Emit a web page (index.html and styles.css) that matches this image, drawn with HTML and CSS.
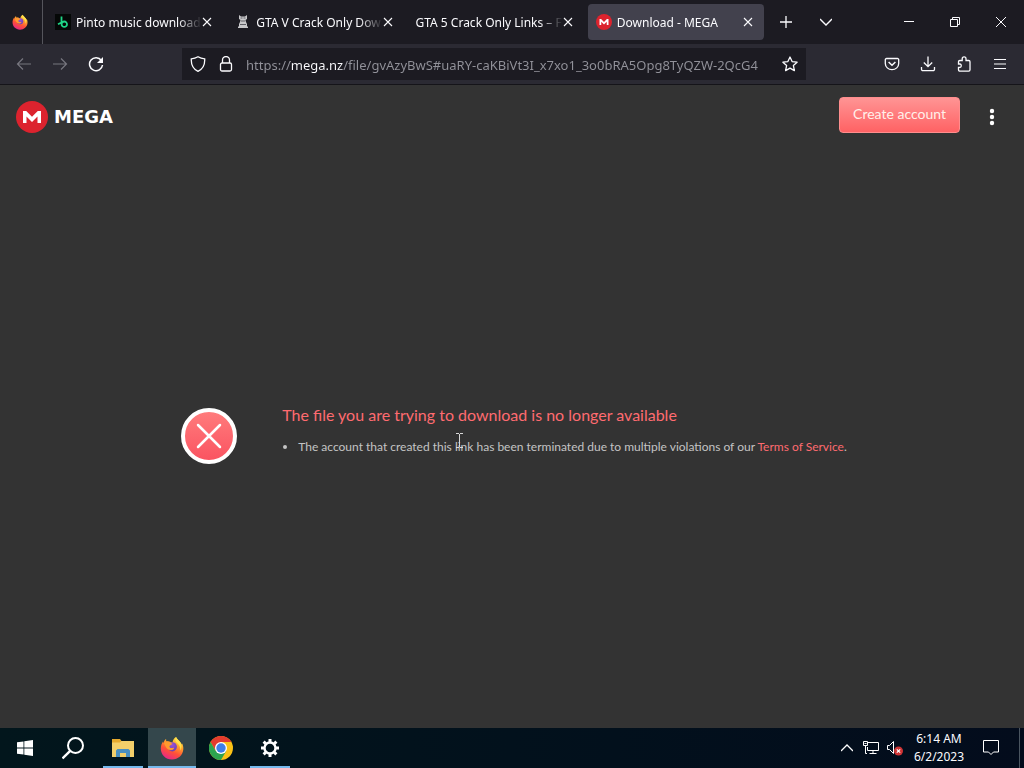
FILE: index.html
```html
<!DOCTYPE html>
<html lang="en">
<head>
<meta charset="utf-8">
<meta name="viewport" content="width=device-width, initial-scale=1">
<title>Download - MEGA</title>
<link rel="stylesheet" href="styles.css">
</head>
<body>
<svg class="defs" aria-hidden="true">
  <defs>
    <linearGradient id="flame" x1="0.8" y1="0" x2="0.3" y2="1">
      <stop offset="0" stop-color="#fff04a"/><stop offset="0.35" stop-color="#ffa02c"/><stop offset="0.65" stop-color="#ff5038"/><stop offset="1" stop-color="#e5258b"/>
    </linearGradient>
    <radialGradient id="globe" cx="0.5" cy="0.3" r="0.7">
      <stop offset="0" stop-color="#9a52d8"/><stop offset="1" stop-color="#6a3fb0"/>
    </radialGradient>
    <linearGradient id="alert" x1="0" y1="0" x2="0" y2="1">
      <stop offset="0" stop-color="#ff7d7d"/><stop offset="1" stop-color="#fa5260"/>
    </linearGradient>
    <symbol id="firefox" viewBox="0 0 24 24">
      <path fill="url(#flame)" d="M16 1c1 2 3 3.500 4.500 5.500.6.800.8 1.300.9 2 .5-.4.500-1 .4-1.500 1.300 2 1.700 4.200 1.500 6.500C22.800 19.200 18 23.500 12 23.500 5.500 23.500.8 18.700.8 12.500c0-3 1-5.300 2.200-7 0 .7.100 1.100.4 1.600C3.900 5 5 3.600 6.200 3c-.3 1 0 2 .4 2.600 1-.2 2.200 0 3 .5 1-.1 2 0 3 .4C12.500 4.500 14 2 16 1z"/>
      <circle cx="12.300" cy="10.800" r="4.600" fill="url(#globe)"/>
      <path fill="#ff9a2e" d="M4 7c1.800-2 4.600-2.200 6.300-1.200-.2.900.6 1.500 2.200 1.700-.3 1.300-2.600 1.500-3 2.700-.3 1 .8 1.800 2 1.900 1 .1 1.700-.5 2.700-.2-.7 1.700-2.300 2.400-4.200 2.200-2.600-.4-4.600-3-6-7.100z"/>
      <path fill="#ffe14d" d="M16 1c1 2 3 3.500 4.500 5.500 1.500 2.200 1.300 6-.2 8 .3-3.300-.8-5.500-3-7.200C15.300 5.700 14.800 3.500 16 1z"/>
    </symbol>
    <symbol id="mega" viewBox="0 0 32 32">
      <circle cx="16" cy="16" r="16" fill="#dc232e"/>
      <path fill="#fff" d="M7 22V10h3.200l5.800 5.800 5.800-5.800H25v12h-3.500v-6.500L16 20.900l-5.500-5.400V22z"/>
    </symbol>
    <symbol id="close" viewBox="0 0 10 10"><path d="M1 1l8 8M9 1L1 9" fill="none" stroke="currentColor" stroke-width="1.100"/></symbol>
  </defs>
</svg>

<header class="browser">
  <div class="tabstrip">
    <button class="pinned" aria-label="Firefox View"><svg class="i16"><use href="#firefox"/></svg></button>
    <div class="tabs">
      <div class="tab">
        <svg class="i16" viewBox="0 0 16 16"><path fill="#050807" d="M0 0h16v16H0z"/><path d="M6.500 2.500V10M12 10.200a2.700 2.700 0 1 1-5.400 0 2.700 2.700 0 1 1 5.400 0zM7 8.300l-4 2" fill="none" stroke="#1fd587" stroke-width="1.800"/></svg>
        <span class="tab-title">Pinto music download</span>
        <button class="tab-close" aria-label="Close tab"><svg class="i10"><use href="#close"/></svg></button>
      </div>
      <div class="tab">
        <svg class="i16" viewBox="0 0 16 16"><path fill="#c9c9cb" d="M4 1l2 1.500h4L12 1v4l-1.500 1L11 8l1 2v2l1 1v1H3v-1l1-1v-2l1-2 .5-2L4 5z"/><path d="M5.500 4h2M8.500 4h2M6 7h4M5 10.500h6" stroke="#5e5e65" stroke-width="1"/></svg>
        <span class="tab-title">GTA V Crack Only Dow</span>
        <button class="tab-close" aria-label="Close tab"><svg class="i10"><use href="#close"/></svg></button>
      </div>
      <div class="tab">
        <span class="tab-title">GTA 5 Crack Only Links – Fi</span>
        <button class="tab-close" aria-label="Close tab"><svg class="i10"><use href="#close"/></svg></button>
      </div>
      <div class="tab active">
        <svg class="i16"><use href="#mega"/></svg>
        <span class="tab-title">Download - MEGA</span>
        <button class="tab-close" aria-label="Close tab"><svg class="i10"><use href="#close"/></svg></button>
      </div>
    </div>
    <button class="tool" aria-label="New tab"><svg class="i12" viewBox="0 0 12 12"><path d="M6 0v12M0 6h12" stroke="currentColor" stroke-width="1.300"/></svg></button>
    <button class="tool" aria-label="List all tabs"><svg class="i12" viewBox="0 0 12 12"><path d="M0 3l6 6 6-6" fill="none" stroke="currentColor" stroke-width="1.400"/></svg></button>
    <div class="window-buttons">
      <button aria-label="Minimize"><svg class="i10" viewBox="0 0 10 10"><path d="M0 4.500h10" stroke="currentColor"/></svg></button>
      <button aria-label="Restore"><svg class="i10" viewBox="0 0 10 10"><path d="M.5 2.500h7v7h-7zM2.500 2.500v-2h7v7h-2" fill="none" stroke="currentColor"/></svg></button>
      <button aria-label="Close"><svg class="i10" viewBox="0 0 10 10"><path d="M0 0l10 10M10 0L0 10" stroke="currentColor"/></svg></button>
    </div>
  </div>

  <div class="navbar">
    <div class="nav-left">
      <button class="tool dim" aria-label="Back"><svg class="i16" viewBox="0 0 16 16"><path d="M15 8H1.500M7 2.500L1.500 8 7 13.500" fill="none" stroke="currentColor" stroke-width="1.200"/></svg></button>
      <button class="tool dim" aria-label="Forward"><svg class="i16" viewBox="0 0 16 16"><path d="M1 8h13.500M9 2.500L14.500 8 9 13.500" fill="none" stroke="currentColor" stroke-width="1.200"/></svg></button>
      <button class="tool" aria-label="Reload"><svg class="i16" viewBox="0 0 16 16"><path d="M13.400 4.500A6.500 6.500 0 1 0 14.500 9" fill="none" stroke="currentColor" stroke-width="1.500"/><path d="M15 1v6H9z" fill="currentColor"/></svg></button>
    </div>
    <div class="urlbar">
      <svg class="i16" viewBox="0 0 16 16"><path d="M8 .8C6 2 3.500 2.700 1.300 2.900 1 8.500 3 13 8 15.300 13 13 15 8.500 14.700 2.900 12.500 2.700 10 2 8 .8z" fill="none" stroke="currentColor" stroke-width="1.300"/></svg>
      <svg class="i16" viewBox="0 0 16 16"><rect x="2.500" y="7" width="11" height="8" rx="1.500" fill="none" stroke="currentColor" stroke-width="1.300"/><path d="M4.500 7V4a3.500 3.500 0 0 1 7 0v3" fill="none" stroke="currentColor" stroke-width="1.300"/></svg>
      <input class="url" type="text" aria-label="Address" spellcheck="false" value="https://mega.nz/file/gvAzyBwS#uaRY-caKBiVt3I_x7xo1_3o0bRA5Opg8TyQZW-2QcG4">
      <button class="star" aria-label="Bookmark this page"><svg class="i16" viewBox="0 0 16 16"><path d="M8 1l2.100 4.600 5 .6-3.700 3.400 1 5L8 12.100l-4.400 2.500 1-5L.9 6.200l5-.6z" fill="none" stroke="currentColor" stroke-width="1.300" stroke-linejoin="round"/></svg></button>
    </div>
    <div class="nav-right">
      <button class="tool" aria-label="Save to Pocket"><svg class="i16" viewBox="0 0 16 16"><path d="M2.500 2.500h11a1.200 1.200 0 0 1 1.200 1.200V7.500a6.700 6.200 0 0 1-13.400 0V3.700a1.200 1.200 0 0 1 1.200-1.200z" fill="none" stroke="currentColor" stroke-width="1.300"/><path d="M4.600 6L8 9.300 11.400 6" fill="none" stroke="currentColor" stroke-width="1.500"/></svg></button>
      <button class="tool" aria-label="Downloads"><svg class="i16" viewBox="0 0 16 16"><path d="M8 .5v10M3.800 6.500L8 10.700l4.200-4.200M1.500 11v2.300a1.300 1.300 0 0 0 1.300 1.300h10.400a1.300 1.300 0 0 0 1.300-1.300V11" fill="none" stroke="currentColor" stroke-width="1.300"/></svg></button>
      <button class="tool" aria-label="Extensions"><svg class="i16" viewBox="0 0 16 16"><path d="M2.500 8V5.800c0-.7.500-1.300 1.300-1.300h2.400V2.800a1.900 1.900 0 0 1 3.800 0v1.700h2.700c.7 0 1.300.5 1.300 1.300v8c0 .7-.5 1.300-1.300 1.300H3.800c-.7 0-1.300-.5-1.300-1.300v-2.500H4a1.700 1.700 0 0 0 0-3.300z" fill="none" stroke="currentColor" stroke-width="1.300"/></svg></button>
      <button class="tool" aria-label="Menu"><svg class="i12" viewBox="0 0 12 12"><path d="M0 1.500h12M0 6h12M0 10.500h12" stroke="currentColor" stroke-width="1.200"/></svg></button>
    </div>
  </div>
</header>

<main class="page">
  <div class="topbar">
    <a class="brand" href="#" aria-label="MEGA">
      <svg class="brand-mark"><use href="#mega"/></svg>
      <span class="brand-name">MEGA</span>
    </a>
    <div class="top-actions">
      <button class="create">Create account</button>
      <button class="more" aria-label="Main menu"><svg width="6" height="18" viewBox="0 0 6 18"><circle cx="3" cy="3" r="2.200" fill="#fff"/><circle cx="3" cy="9" r="2.200" fill="#fff"/><circle cx="3" cy="15" r="2.200" fill="#fff"/></svg></button>
    </div>
  </div>
  <section class="notice">
    <svg class="notice-icon" viewBox="0 0 56 56"><circle cx="28" cy="28" r="26" fill="url(#alert)" stroke="#fff" stroke-width="4"/><path d="M17 17l22 22M39 17L17 39" stroke="#fff" stroke-width="2.500" stroke-linecap="round"/></svg>
    <div class="notice-text">
      <h1>The file you are trying to download is no longer available</h1>
      <ul>
        <li>The account that created this link has been terminated due to multiple violations of our <a href="#">Terms of Service</a>.</li>
      </ul>
      <svg class="cursor" viewBox="0 0 7 15" aria-hidden="true"><path d="M0 .5h3M4 .5h3M3.500 1v13M0 14.500h3M4 14.500h3" stroke="#d8d8d8" fill="none"/></svg>
    </div>
  </section>
</main>

<footer class="taskbar">
  <nav class="apps">
    <button class="app" aria-label="Start"><svg class="i16" viewBox="0 0 16 16"><path fill="#fff" d="M0 2.300l6.500-.9v6.200H0zM7.300 1.300L16 0v7.600H7.300zM0 8.400h6.500v6.200L0 13.700zM7.300 8.400H16V16l-8.700-1.300z"/></svg></button>
    <button class="app" aria-label="Search"><svg class="i24" viewBox="0 0 24 24"><circle cx="13.500" cy="9.500" r="7.500" fill="none" stroke="#fff" stroke-width="2"/><path d="M8.200 14.800L.5 22.500" stroke="#fff" stroke-width="2.400"/></svg></button>
    <button class="app open" aria-label="File Explorer"><svg class="i24" viewBox="0 0 24 24"><path fill="#e5a92e" d="M1 3h8l1.500 2H22v4H1z"/><path fill="#f3cf6a" d="M1 6.500h8L10.500 5H23v16H1z"/><path fill="#4a8fc0" d="M5 21v-6.500L6.500 13h11l1.500 1.500V21h-4v-4H9v4z"/></svg></button>
    <button class="app open current" aria-label="Firefox"><svg class="i24"><use href="#firefox"/></svg></button>
    <button class="app" aria-label="Chrome"><svg class="i24" viewBox="0 0 24 24"><circle cx="12" cy="12" r="12" fill="#fbc116"/><path fill="#e33b2e" d="M1.600 6A12 12 0 0 1 22.400 6H12L6.800 15z"/><path fill="#2da44f" d="M1.600 6A12 12 0 0 0 12 24l5.200-9H6.800z"/><circle cx="12" cy="12" r="6" fill="#fff"/><circle cx="12" cy="12" r="4.700" fill="#3f7fe8"/></svg></button>
    <button class="app open" aria-label="Settings"><svg class="i20" viewBox="0 0 20 20"><circle cx="10" cy="10" r="5.500" fill="none" stroke="#fff" stroke-width="2.400"/><path d="M10 1v3M10 16v3M1 10h3M16 10h3M3.600 3.600l2.200 2.200M14.200 14.200l2.200 2.200M3.600 16.400l2.200-2.200M14.200 5.800l2.200-2.200" stroke="#fff" stroke-width="3"/></svg></button>
  </nav>
  <div class="tray">
    <button aria-label="Show hidden icons"><svg class="i12" viewBox="0 0 12 12"><path d="M0 9l6-6 6 6" fill="none" stroke="#fff" stroke-width="1.300"/></svg></button>
    <button aria-label="Network"><svg class="i16" viewBox="0 0 16 16"><path d="M5 2.500h10.500v8H4.500V7M10 10.500v3M6.500 13.500h7M2.500 6v7.500H4M.5 1.500h4v4h-4zM1.500 3.500h2" fill="none" stroke="#fff"/></svg></button>
    <button aria-label="Volume muted"><svg class="i16" viewBox="0 0 16 16"><path d="M.5 5.500h2l4-4v12l-4-4h-2z" fill="none" stroke="#fff"/><circle cx="11.500" cy="11" r="4.500" fill="#cf3435"/><path d="M9.800 9.300l3.400 3.400M13.200 9.300l-3.400 3.400" stroke="#fff" stroke-width="1.200"/></svg></button>
    <button class="clock"><time>6:14 AM</time><time>6/2/2023</time></button>
    <button class="action" aria-label="Notifications"><svg class="i16" viewBox="0 0 16 16"><path d="M.5.500h15v11.500H10.500L8 14.500 5.500 12H.5z" fill="none" stroke="#fff"/></svg></button>
    <button class="desktop" aria-label="Show desktop"></button>
  </div>
</footer>
</body>
</html>
```
FILE: styles.css
```css
* { box-sizing: border-box; }
body {
  margin: 0;
  min-height: 100vh;
  display: flex;
  flex-direction: column;
  background: #333;
  color: #fbfbfe;
  font-family: "Noto Sans", "Open Sans", sans-serif;
  font-size: 12px;
}
button {
  margin: 0;
  padding: 0;
  border: 0;
  background: none;
  color: inherit;
  font: inherit;
}
svg { display: block; flex: none; }
.defs { position: absolute; width: 0; height: 0; }
.i10 { width: 10px; height: 10px; }
.i12 { width: 12px; height: 12px; }
.i16 { width: 16px; height: 16px; }
.i20 { width: 20px; height: 20px; }
.i24 { width: 24px; height: 24px; }

/* Browser chrome */
.tabstrip {
  display: flex;
  align-items: center;
  height: 44px;
  background: #1c1b22;
}
.pinned {
  display: grid;
  place-items: center;
  width: 43px;
  height: 44px;
  padding-right: 2px;
  border-right: 1px solid #55555c;
}
.tabs {
  display: flex;
  gap: 4px;
  flex: 0 1 721px;
  margin-right: 2px;
  padding-left: 4px;
  min-width: 0;
}
.tab {
  display: flex;
  align-items: center;
  gap: 5px;
  flex: 1 1 0;
  min-width: 0;
  height: 36px;
  padding: 0 8px;
  border-radius: 4px;
}
.tab.active { background: #42414d; }
.tab-title {
  flex: 1;
  min-width: 0;
  margin-right: -8px;
  padding-top: 1px;
  overflow: hidden;
  white-space: nowrap;
  line-height: 20px;
  -webkit-mask-image: linear-gradient(to left, transparent, #000 24px);
  mask-image: linear-gradient(to left, transparent, #000 24px);
}
.tab-close {
  display: grid;
  place-items: center;
  width: 16px;
  height: 20px;
}
.tool {
  display: grid;
  place-items: center;
  width: 36px;
  height: 32px;
}
.tabstrip .tool { width: 40px; }
.window-buttons {
  display: flex;
  margin-left: auto;
}
.window-buttons button {
  display: grid;
  place-items: center;
  width: 46px;
  height: 44px;
}
.navbar {
  display: flex;
  align-items: center;
  height: 41px;
  background: #2b2a33;
  border-bottom: 1px solid #151419;
}
.nav-left {
  display: flex;
  flex: 1 1 0;
  padding-left: 6px;
}
.nav-right {
  display: flex;
  justify-content: flex-end;
  flex: 1 1 0;
  padding-right: 6px;
}
.dim { color: #77767f; }
.urlbar {
  display: flex;
  align-items: center;
  gap: 12px;
  flex: 0 1 624px;
  min-width: 0;
  height: 32px;
  margin-left: -36px;
  padding: 0 8px;
  background: #1c1b22;
}
.url {
  flex: 1;
  min-width: 0;
  height: 24px;
  padding: 2px 0 0;
  border: 0;
  outline: 0;
  font: inherit;
  font-size: 13px;
  color: transparent;
  background: linear-gradient(to right, #92929a 44px, #fbfbfe 44px, #fbfbfe 97px, #92929a 97px);
  -webkit-background-clip: text;
  background-clip: text;
}

/* Page */
.page {
  flex: 1;
  display: flex;
  flex-direction: column;
  font-family: Lato, sans-serif;
}
.topbar {
  display: flex;
  align-items: center;
  justify-content: space-between;
  padding: 12px 16px;
}
.brand {
  display: flex;
  align-items: center;
  gap: 6px;
  padding-top: 3px;
  color: #fff;
  text-decoration: none;
}
.brand-mark { width: 32px; height: 32px; }
.brand-name {
  font-family: "DejaVu Sans", sans-serif;
  font-size: 18px;
  font-weight: 700;
  line-height: 24px;
}
.top-actions {
  display: flex;
  align-items: center;
  gap: 16px;
}
.create {
  height: 36px;
  padding: 0 13px 3px;
  border: 1px solid #ff8d8d;
  border-radius: 4px;
  background: linear-gradient(#ff9494, #ff6264);
  color: #fff0ea;
  font-size: 14px;
}
.more {
  display: grid;
  place-items: center;
  width: 32px;
  height: 32px;
  padding-top: 3px;
}
.notice {
  flex: 1;
  display: flex;
  align-items: center;
  justify-content: center;
  gap: 45px;
  padding: 0 16px 2px 20px;
}
.notice-icon { width: 56px; height: 56px; }
.notice-text {
  position: relative;
  padding-bottom: 10px;
}
.notice h1 {
  margin: 0 0 13px;
  color: #ff6b70;
  font-size: 16px;
  font-weight: 400;
  line-height: 20px;
}
.notice ul {
  margin: 0;
  padding-left: 16px;
  color: #c4c4c4;
  font-size: 12px;
  line-height: 18px;
}
.notice a { color: #ff6b70; text-decoration: none; }
.cursor {
  position: absolute;
  left: 174px;
  top: 28px;
  width: 7px;
  height: 15px;
}

/* Taskbar */
.taskbar {
  display: flex;
  justify-content: space-between;
  height: 40px;
  background: linear-gradient(to right, #02161c, #02101c 60%, #030c1c);
}
.apps { display: flex; gap: 1px; padding-left: 1px; }
.app {
  display: grid;
  place-items: center;
  width: 48px;
  height: 40px;
}
.app.open {
  background: linear-gradient(#76b9ed, #76b9ed) center bottom / 40px 2px no-repeat;
}
.app.open.current {
  background: linear-gradient(#76b9ed, #76b9ed) center bottom / 48px 2px no-repeat, #34474c;
}
.tray {
  display: flex;
  align-items: center;
}
.tray button {
  display: grid;
  place-items: center;
  width: 24px;
  height: 40px;
}
.tray .clock {
  width: 64px;
  align-content: center;
  line-height: 18px;
}
.tray .action { width: 40px; margin-right: 8px; }
.tray .desktop {
  width: 5px;
  border-left: 1px solid #4a5560;
}
```
